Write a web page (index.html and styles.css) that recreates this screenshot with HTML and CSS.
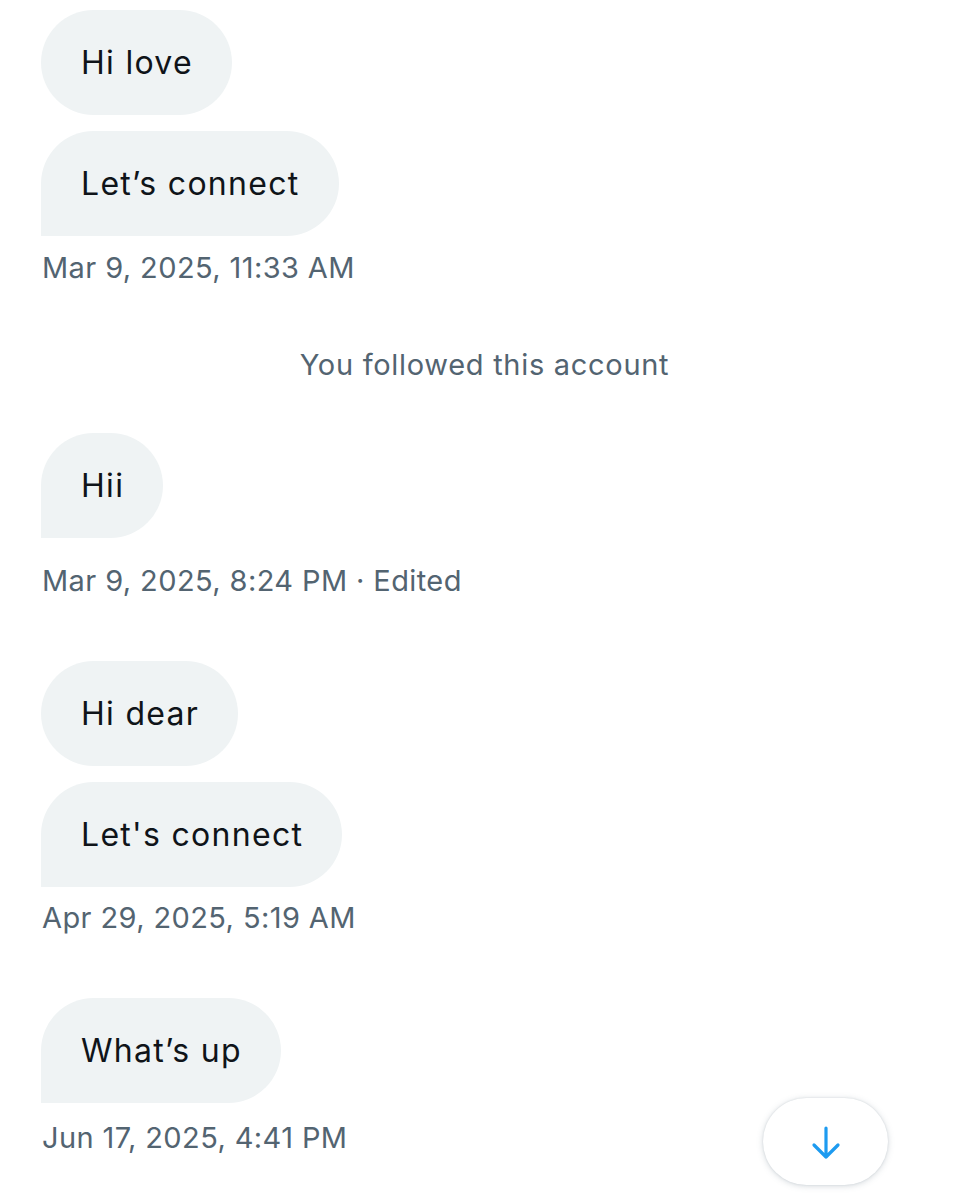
FILE: index.html
```html
<!DOCTYPE html>
<html lang="en">
<head>
<meta charset="utf-8">
<title>Messages</title>
<link rel="stylesheet" href="styles.css">
</head>
<body>
<main class="thread">
  <section class="group">
    <div class="bubble">Hi love</div>
    <div class="bubble bubble--last">Let’s connect</div>
    <div class="stamp">Mar 9, 2025, 11:33 AM</div>
  </section>

  <div class="system">You followed this account</div>

  <section class="group group--after-system">
    <div class="bubble bubble--last">Hii</div>
    <div class="stamp stamp--edited">Mar 9, 2025, 8:24 PM · Edited</div>
  </section>

  <section class="group">
    <div class="bubble">Hi dear</div>
    <div class="bubble bubble--last">Let's connect</div>
    <div class="stamp stamp--tight">Apr 29, 2025, 5:19 AM</div>
  </section>

  <section class="group">
    <div class="bubble bubble--last">What’s up</div>
    <div class="stamp stamp--end">Jun 17, 2025, 4:41 PM</div>
  </section>
</main>

<button class="scroll-down" aria-label="Scroll to bottom">
  <svg viewBox="0 0 40 40" width="40" height="40" aria-hidden="true">
    <path d="M20 6 V35 M8 23 L20 35 L32 23" fill="none" stroke="#1d9bf0" stroke-width="3.2" stroke-linecap="round" stroke-linejoin="round"/>
  </svg>
</button>
</body>
</html>
```

FILE: styles.css
```css
html, body {
  margin: 0;
  padding: 0;
  background: #ffffff;
}

body {
  font-family: Inter, "Noto Sans", "Liberation Sans", sans-serif;
  color: #0f1419;
  width: 969px;
  height: 1200px;
  overflow: hidden;
  position: relative;
}

.thread {
  display: flex;
  flex-direction: column;
  padding: 10px 0 0 41px;
}

.group {
  display: flex;
  flex-direction: column;
  align-items: flex-start;
  gap: 16px;
  margin-top: 62px;
}

.group:first-child {
  margin-top: 0;
}

.group--after-system {
  margin-top: 50px;
}

.bubble {
  background: #eff3f4;
  border-radius: 53px;
  padding: 32px 39px 32px 40px;
  font-size: 32px;
  line-height: 41px;
  letter-spacing: 1.3px;
  color: #0f1419;
  white-space: nowrap;
}

.bubble--last {
  border-bottom-left-radius: 0;
}

.stamp {
  font-size: 29px;
  line-height: 36px;
  letter-spacing: 0.4px;
  color: #536471;
  margin-top: -2px;
  padding-left: 1px;
}

.stamp--edited {
  margin-top: 9px;
}

.stamp--tight {
  margin-top: -3px;
}

.stamp--end {
  margin-top: 1px;
}

.system {
  margin-top: 61px;
  align-self: center;
  font-size: 29px;
  line-height: 36px;
  letter-spacing: 0.7px;
  color: #536471;
  margin-left: -41px;
}

.scroll-down {
  position: absolute;
  left: 763px;
  top: 1098px;
  width: 125px;
  height: 87px;
  border: none;
  border-radius: 44px;
  background: #ffffff;
  box-shadow: 0 1px 6px rgba(101, 119, 134, 0.28), 0 0 2px rgba(101, 119, 134, 0.2);
  display: flex;
  align-items: center;
  justify-content: center;
  padding: 0;
}

.scroll-down svg {
  display: block;
}
```
